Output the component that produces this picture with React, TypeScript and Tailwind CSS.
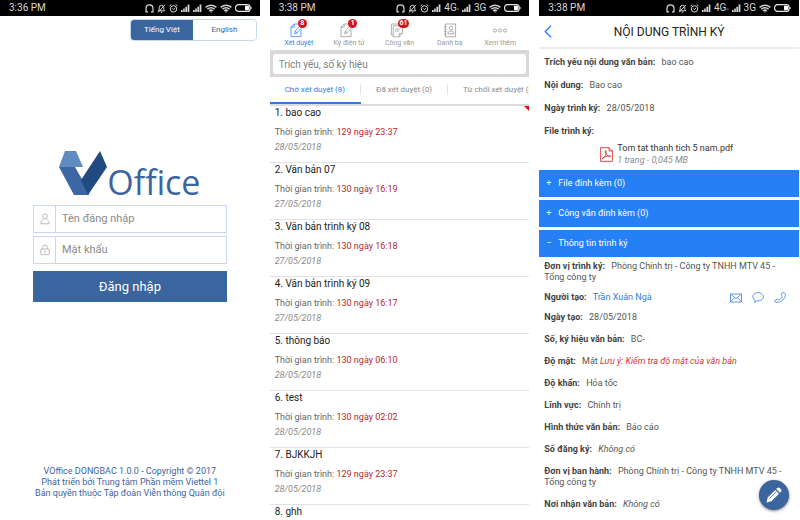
import React, { useState } from "react";
import clsx from "clsx";

type Lang = "vi" | "en";

interface Doc {
  title: string;
  elapsed: string;
  date: string;
  urgent?: boolean;
}

const DOCS: Doc[] = [
  { title: "bao cao", elapsed: "129 ngày 23:37", date: "28/05/2018", urgent: true },
  { title: "Văn bản 07", elapsed: "130 ngày 16:19", date: "27/05/2018" },
  { title: "Văn bản trình ký 08", elapsed: "130 ngày 16:18", date: "27/05/2018" },
  { title: "Văn bản trình ký 09", elapsed: "130 ngày 16:17", date: "27/05/2018" },
  { title: "thông báo", elapsed: "130 ngày 06:10", date: "28/05/2018" },
  { title: "test", elapsed: "130 ngày 02:02", date: "28/05/2018" },
  { title: "BJKKJH", elapsed: "129 ngày 23:37", date: "28/05/2018" },
  { title: "ghh", elapsed: "129 ngày 23:37", date: "28/05/2018" },
];

const TABS = ["Chờ xét duyệt (8)", "Đã xét duyệt (0)", "Từ chối xét duyệt (0)"];

/* ---------- status bar ---------- */

function Signal() {
  return (
    <svg viewBox="0 0 9 8" className="h-2 w-[9px] shrink-0" fill="#d8d8d8">
      <path d="M0 6h1.6v2H0zM2.2 4.6h1.6V8H2.2zM4.4 2.8H6V8H4.4zM6.6.6h1.8V8H6.6z" />
    </svg>
  );
}

function Wifi() {
  return (
    <svg viewBox="0 0 12 9" className="h-[9px] w-3 shrink-0" fill="none" stroke="#d0d0d0" strokeWidth="1.5">
      <path d="M.6 3.4Q6-1 11.4 3.4M2.4 5.2Q6 2.2 9.6 5.2M4.2 6.9Q6 5.3 7.8 6.9" />
      <circle cx="6" cy="7.9" r=".7" fill="#d0d0d0" stroke="none" />
    </svg>
  );
}

function StatusBar({ time, mobile }: { time: string; mobile?: boolean }) {
  return (
    <div className="flex h-4 shrink-0 items-center justify-between bg-black pr-2 pl-[9px] text-[#d8d8d8]">
      <span className="text-[10px] leading-4">{time}</span>
      <div className="flex items-center gap-[3px]">
        <svg viewBox="0 0 9 9" className="size-[9px]" fill="none" stroke="#d8d8d8" strokeWidth="1.2">
          <path d="M1 8V4.4a3.5 3.5 0 0 1 7 0V8M.6 7.9H3M6 7.9h2.4" />
        </svg>
        <svg viewBox="0 0 9 9" className="size-[9px]" fill="none" stroke="#d8d8d8" strokeWidth="1">
          <path d="M1.4 6.8h6.2L6.8 5.4V3.6a2.3 2.3 0 0 0-4.6 0v1.8zM3.8 8.2h1.4M1 8.4 8 .8" />
        </svg>
        <svg viewBox="0 0 9 9" className="size-[9px]" fill="none" stroke="#d8d8d8" strokeWidth="1">
          <circle cx="4.5" cy="4.9" r="3.2" />
          <path d="M.5 2 2.3.6M8.5 2 6.7.6M3.1 4.4l1.2 1.2 1.8-1.4" />
        </svg>
        <Signal />
        {mobile && (
          <span className="text-[10px] leading-4">
            4G<span className="text-[6px]">▫</span>
          </span>
        )}
        <Signal />
        {mobile && <span className="text-[10px] leading-4">3G</span>}
        {!mobile && <Wifi />}
        <Wifi />
        <svg viewBox="0 0 17 8" className="h-2 w-[17px] shrink-0">
          <rect x=".6" y=".6" width="14.6" height="6.8" rx="3" fill="none" stroke="#e4e4e4" strokeWidth="1.2" />
          <path d="M10 1.8h2.6q1.6 0 1.6 1.4v1.6q0 1.4-1.6 1.4H10z" fill="#fff" />
          <path d="M15.6 3h1v2h-1z" fill="#e4e4e4" />
        </svg>
      </div>
    </div>
  );
}

/* ---------- login ---------- */

function Field({ label, type, icon }: { label: string; type: string; icon: React.ReactNode }) {
  return (
    <label className="flex h-7 border border-[#c9d8ef] bg-white">
      <span className="flex w-[22px] items-center justify-center border-r border-[#c9d8ef]">{icon}</span>
      <input
        type={type}
        aria-label={label}
        placeholder={label}
        className="min-w-0 flex-1 px-1.5 text-[11px] text-[#555] outline-none placeholder:text-[#8a8a8a]"
      />
    </label>
  );
}

function LoginScreen() {
  const [lang, setLang] = useState<Lang>("vi");

  const langClass = (active: boolean) =>
    clsx("flex-1 text-[8px]", active ? "bg-[#3b659f] text-white" : "bg-white text-[#3b659f]");

  return (
    <section className="flex min-w-0 flex-col bg-white">
      <StatusBar time="3:36 PM" />
      <div className="flex justify-end pt-[3px] pr-[3px]">
        <div className="flex h-[22px] w-[127px] overflow-hidden rounded border border-[#c9d8ef]">
          <button onClick={() => setLang("vi")} className={langClass(lang === "vi")}>
            Tiếng Việt
          </button>
          <button onClick={() => setLang("en")} className={langClass(lang === "en")}>
            English
          </button>
        </div>
      </div>

      <form className="mt-[110px] px-[33px]" onSubmit={(e) => e.preventDefault()}>
        <div className="flex h-[54px] justify-center">
          <svg viewBox="0 0 48 44" className="h-11 w-12">
            <path d="M0 16h16l8 14 6 14H15z" fill="#3c67a4" />
            <path d="M6 0h11l7 16H0z" fill="#5f8bc0" />
            <path d="M41 0l7 16-19 28-7-15z" fill="#214b80" />
          </svg>
          <span className="font-['Open_Sans',sans-serif] text-[34px] leading-[62px] text-[#3b659f]">Office</span>
        </div>
        <div className="flex flex-col gap-[3px]">
          <Field
            label="Tên đăng nhập"
            type="text"
            icon={
              <svg viewBox="0 0 10 12" className="h-3 w-2.5" fill="none" stroke="#aaa" strokeWidth=".8">
                <circle cx="5" cy="3.4" r="2.4" />
                <path d="M3.6 6.6C1.8 7 1 8 1 9.2v1.6h8V9.2C9 8 8.2 7 6.4 6.6" />
              </svg>
            }
          />
          <Field
            label="Mật khẩu"
            type="password"
            icon={
              <svg viewBox="0 0 10 12" className="h-3 w-2.5" fill="none" stroke="#aaa" strokeWidth=".8">
                <rect x=".8" y="5" width="8.4" height="5.6" rx=".6" />
                <path d="M2.6 5V3.4a2.4 2.4 0 0 1 4.8 0V5M5 7v2M4.2 7.2h1.6" />
              </svg>
            }
          />
        </div>
        <button type="submit" className="mt-[7px] h-[31px] w-full bg-[#3b659f] text-[13px] text-white">
          Đăng nhập
        </button>
      </form>

      <footer className="mt-auto pb-[21px] text-center text-[9px] leading-[11px] text-[#3b659f]">
        <p>VOffice DONGBAC 1.0.0 - Copyright © 2017</p>
        <p>Phát triển bởi Trung tâm Phần mềm Viettel 1</p>
        <p>Bản quyền thuộc Tập đoàn Viễn thông Quân đội</p>
      </footer>
    </section>
  );
}

/* ---------- document list ---------- */

function PenDocIcon() {
  return (
    <svg viewBox="0 0 14 15" className="h-[15px] w-3.5" fill="none" stroke="currentColor" strokeWidth=".8">
      <path d="M11 6.5V13.6H1V4.2L4.2 1H8M1 4.2h3.2V1" />
      <path d="M4.6 10.6l.6-2.4 5-5.4 1.8 1.6-5 5.4zM5.2 8.2 7 9.8" />
    </svg>
  );
}

function PagesIcon() {
  return (
    <svg viewBox="0 0 14 15" className="h-[15px] w-3.5" fill="none" stroke="currentColor" strokeWidth=".8">
      <path d="M3.2 12H1.4V1H9M3.2 2.8h9.2v7.6l-3.2 3.4h-6zM12.4 10.4H9.2v3.4M5 6h5.4M5 8h4" />
    </svg>
  );
}

function ContactsIcon() {
  return (
    <svg viewBox="0 0 14 15" className="h-[15px] w-3.5" fill="none" stroke="currentColor" strokeWidth=".8">
      <path d="M2.4 1h10.2v12.8H2.4zM1 3.4h2.6M1 6h2.6M1 8.6h2.6M1 11.2h2.6" />
      <circle cx="8" cy="5.2" r="1.8" />
      <path d="M5 10.8c0-1.8 1-2.8 3-2.8s3 1 3 2.8z" />
    </svg>
  );
}

function MoreIcon() {
  return (
    <svg viewBox="0 0 16 15" className="h-[15px] w-4" fill="none" stroke="currentColor" strokeWidth=".8">
      <circle cx="3" cy="7.5" r="1.6" />
      <circle cx="8" cy="7.5" r="1.6" />
      <circle cx="13" cy="7.5" r="1.6" />
    </svg>
  );
}

const NAV = [
  { label: "Xét duyệt", badge: "8", icon: <PenDocIcon /> },
  { label: "Ký điện tử", badge: "1", icon: <PenDocIcon /> },
  { label: "Công văn", badge: "61", icon: <PagesIcon /> },
  { label: "Danh bạ", icon: <ContactsIcon /> },
  { label: "Xem thêm", icon: <MoreIcon /> },
];

function ListScreen() {
  const [nav, setNav] = useState(0);
  const [tab, setTab] = useState(0);

  return (
    <section className="flex min-w-0 flex-col overflow-hidden bg-white">
      <StatusBar time="3:38 PM" mobile />
      <nav className="grid h-[34px] shrink-0 grid-cols-5 px-1">
        {NAV.map((item, i) => (
          <button
            key={item.label}
            onClick={() => setNav(i)}
            className={clsx("flex flex-col items-center pt-[7px]", i === nav ? "text-[#3b82e6]" : "text-[#999]")}
          >
            <span className={clsx("relative flex", item.badge && "-ml-1")}>
              {item.icon}
              {item.badge && (
                <span className="absolute -top-1 left-2 flex h-[9px] min-w-[9px] items-center justify-center rounded-full bg-[#d5121b] px-px text-[7px] leading-[9px] font-bold text-white">
                  {item.badge}
                </span>
              )}
            </span>
            <span className="text-[7px] leading-[11px] whitespace-nowrap">{item.label}</span>
          </button>
        ))}
      </nav>

      <div className="shrink-0 bg-[#d9d9d9] px-[3px] pt-1 pb-[3px]">
        <input
          type="search"
          aria-label="Tìm kiếm"
          placeholder="Trích yếu, số ký hiệu"
          className="block h-5 w-full rounded-[3px] bg-white px-1.5 text-[10px] outline-none placeholder:text-[#808080]"
        />
      </div>

      <div className="flex h-[29px] shrink-0 overflow-hidden border-b-2 border-[#dcdcdc]">
        {TABS.map((label, i) => (
          <button
            key={label}
            onClick={() => setTab(i)}
            className={clsx(
              "flex shrink-0 items-center border-b-2 text-[8px] whitespace-nowrap",
              i === tab ? "border-[#2f7de1] text-[#2f7de1]" : "border-transparent text-[#8a8a8a]"
            )}
          >
            <span className={clsx("px-[15px] leading-[11px]", i < 2 && "border-r border-[#e2e2e2]")}>{label}</span>
          </button>
        ))}
      </div>

      <ol className="min-h-0 flex-1">
        {DOCS.map((doc, i) => (
          <li key={doc.title} className="relative h-[57px] border-b border-[#e2e2e2] px-[5px]">
            <h3 className="text-[10px] leading-[14px] text-[#222]">
              {i + 1}. {doc.title}
            </h3>
            <p className="mt-1 text-[9px] leading-4 text-[#666]">
              Thời gian trình: <span className="text-[#b52a2a]">{doc.elapsed}</span>
            </p>
            <p className="text-[9px] leading-[14px] text-[#8a8a8a] italic">{doc.date}</p>
            {doc.urgent && (
              <svg viewBox="0 0 5 5" className="absolute top-0 right-0 size-[5px]">
                <path d="M0 0h5v5z" fill="#d5121b" />
              </svg>
            )}
          </li>
        ))}
      </ol>
    </section>
  );
}

/* ---------- document detail ---------- */

function Row({ label, children }: { label: string; children?: React.ReactNode }) {
  return (
    <p className="text-[9px] leading-[11px] text-[#555]">
      <b className="mr-1 font-bold text-[#444]">{label}:</b> {children}
    </p>
  );
}

function Panel({ title, open, onToggle }: { title: string; open?: boolean; onToggle?: () => void }) {
  return (
    <button
      onClick={onToggle}
      aria-expanded={!!open}
      className="flex h-[27px] w-full items-center bg-[#2680f5] px-[7px] text-left text-[9px] text-white"
    >
      <span className="w-3">{open ? "−" : "+"}</span>
      {title}
    </button>
  );
}

function DetailScreen() {
  const [open, setOpen] = useState(true);

  return (
    <section className="relative flex min-w-0 flex-col overflow-hidden bg-white">
      <StatusBar time="3:38 PM" mobile />
      <header className="grid h-[33px] shrink-0 grid-cols-[18px_1fr_18px] items-center border-b-2 border-[#ececec]">
        <button aria-label="Quay lại" className="flex justify-center">
          <svg viewBox="0 0 8 13" className="h-[13px] w-2" fill="none" stroke="#2680f5" strokeWidth="1.3">
            <path d="M7 .8 1.2 6.5 7 12.2" />
          </svg>
        </button>
        <h1 className="text-center text-[12px] text-[#222]">NỘI DUNG TRÌNH KÝ</h1>
      </header>

      <div className="flex shrink-0 flex-col gap-3 px-[5px] pt-2">
        <Row label="Trích yếu nội dung văn bản">bao cao</Row>
        <Row label="Nội dung">Bao cao</Row>
        <Row label="Ngày trình ký">28/05/2018</Row>
        <Row label="File trình ký" />
      </div>
      <a href="#file" className="mt-[5px] mb-[3px] ml-[61px] flex shrink-0 items-center gap-1">
        <svg viewBox="0 0 13 15" className="h-[15px] w-[13px]" fill="none" stroke="#e0393e" strokeWidth=".9">
          <path d="M.6.6h8.4L12.4 4v10.4H.6zM9 .6V4h3.4" />
          <path d="M2.6 11.8C4.8 10.6 6.6 7 6.2 4.2c-.3-1-1.2-.6-1 .4.4 2.2 2.4 4.8 4.8 5.2 1 .1 1-.9 0-.9-2.4 0-5 .8-7 1.9-.9.6-.9 1.2-.4 1z" />
        </svg>
        <span className="flex flex-col">
          <span className="text-[9px] leading-3 text-[#333]">Tom tat thanh tich 5 nam.pdf</span>
          <span className="text-[9px] leading-[13px] text-[#8a8a8a] italic">1 trang - 0,045 MB</span>
        </span>
      </a>

      <div className="flex shrink-0 flex-col gap-[3px]">
        <Panel title="File đính kèm (0)" />
        <Panel title="Công văn đính kèm (0)" />
        <Panel title="Thông tin trình ký" open={open} onToggle={() => setOpen(!open)} />
      </div>

      {open && (
        <div className="flex flex-col gap-[11px] px-[5px] pt-1">
          <div className="flex flex-col gap-[9px]">
            <Row label="Đơn vị trình ký">Phòng Chính trị - Công ty TNHH MTV 45 - Tổng công ty</Row>
            <div className="flex h-[11px] items-center justify-between pr-2">
              <Row label="Người tạo">
                <a href="#nguoi-tao" className="text-[#2f7de1]">
                  Trần Xuân Ngà
                </a>
              </Row>
              <div className="flex items-center gap-2.5 text-[#3b82e6]">
                <a href="#mail" aria-label="Gửi thư">
                  <svg viewBox="0 0 12 10" className="h-2.5 w-3" fill="none" stroke="currentColor" strokeWidth=".8">
                    <path d="M.5 1h11v8H.5zM.5 1 6 5.8 11.5 1M.5 9l4-4.4M11.5 9l-4-4.4" />
                  </svg>
                </a>
                <a href="#chat" aria-label="Nhắn tin">
                  <svg viewBox="0 0 12 11" className="h-[11px] w-3" fill="none" stroke="currentColor" strokeWidth=".8">
                    <path d="M3.2 8.2C-1 6 .6.6 6 .6s7.400 5.400 3 7.600c-1.400.7-2.800.7-3.800.5L2.600 10.400z" />
                  </svg>
                </a>
                <a href="#call" aria-label="Gọi điện">
                  <svg viewBox="0 0 12 11" className="h-[11px] w-3" fill="none" stroke="currentColor" strokeWidth=".8">
                    <path d="M8.2.8 9.8.4C11.8 1.6 12 4.2 9.8 6.8 7.4 9.6 4 11.2 1.4 10.2L.6 8.8l2.6-1.6 1.4.8c1.8-.5 3-1.8 3.6-3.2L7.2 3.6z" />
                  </svg>
                </a>
              </div>
            </div>
            <Row label="Ngày tạo">28/05/2018</Row>
          </div>
          <Row label="Số, ký hiệu văn bản">BC-</Row>
          <Row label="Độ mật">
            Mật <i className="text-[#e02f2f]">Lưu ý: Kiểm tra độ mật của văn bản</i>
          </Row>
          <Row label="Độ khẩn">Hỏa tốc</Row>
          <Row label="Lĩnh vực">Chính trị</Row>
          <Row label="Hình thức văn bản">Báo cáo</Row>
          <Row label="Số đăng ký">
            <i>Không có</i>
          </Row>
          <Row label="Đơn vị ban hành">Phòng Chính trị - Công ty TNHH MTV 45 - Tổng công ty</Row>
          <Row label="Nơi nhận văn bản">
            <i>Không có</i>
          </Row>
        </div>
      )}

      <button
        aria-label="Ký duyệt"
        className="absolute right-2.5 bottom-2.5 flex size-[30px] items-center justify-center rounded-full bg-[#3b659f] shadow-[0_1px_3px_rgba(0,0,0,0.5)]"
      >
        <svg viewBox="0 0 16 16" className="size-4" fill="#fff">
          <path d="M.5 15.5l1.2-5L9.2 3l3.8 3.8-7.5 7.5zM10.2 2l1-1c.8-.8 1.8-.7 2.5 0L15 2.3c.7.7.8 1.7 0 2.5l-1 1z" />
          <path d="M3.5 11.5 10 5" stroke="#3b659f" strokeWidth=".8" />
        </svg>
      </button>
    </section>
  );
}

export default function App() {
  return (
    <main className="grid h-screen grid-cols-3 gap-2.5 overflow-hidden bg-white pr-px font-[Roboto,sans-serif]">
      <LoginScreen />
      <ListScreen />
      <DetailScreen />
    </main>
  );
}
